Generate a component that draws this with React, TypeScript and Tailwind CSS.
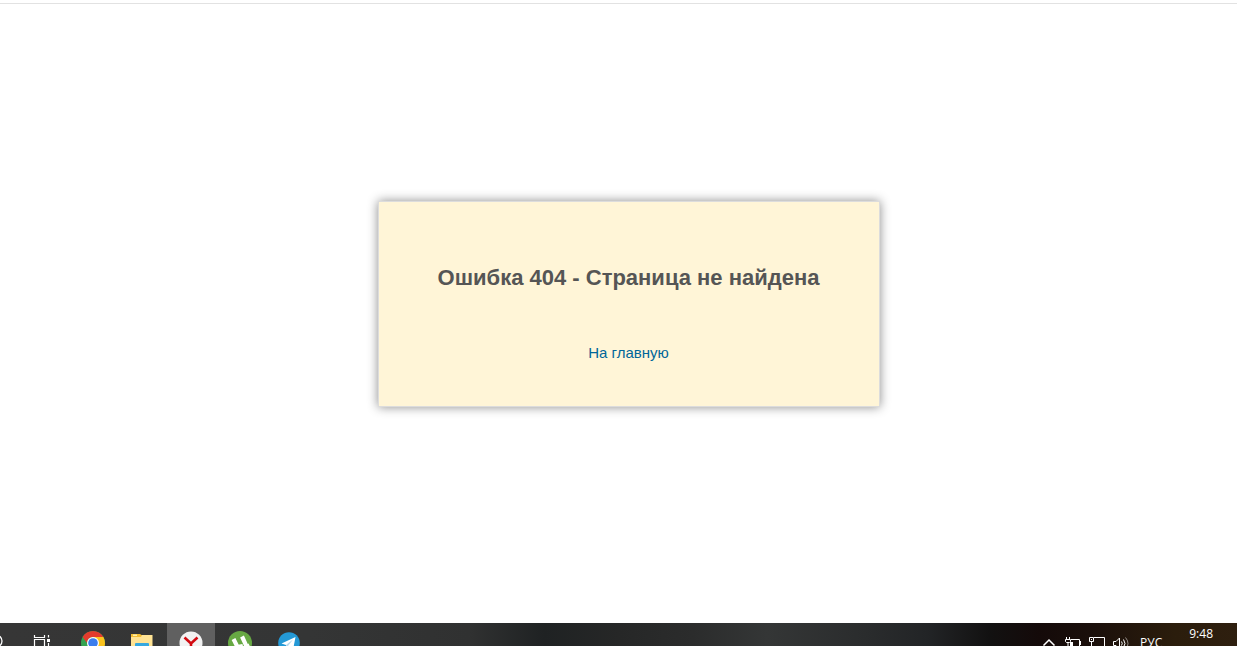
import type { ReactNode } from 'react'

export default function App() {
  return (
    <div className="flex flex-col h-screen overflow-hidden bg-white font-['Liberation_Sans',Arial,sans-serif]">
      <header className="mt-[3px] border-t border-[#e2e2e2]" />
      <main className="flex flex-1 items-center justify-center pl-5 pb-5">
        <section className="w-full max-w-[502px] border border-[#dcdcdc] bg-[#fff5d7] px-6 pt-[61px] pb-[41px] text-center shadow-[0_0_10px_rgba(0,0,0,0.45)]">
          <h1 className="text-[22px] leading-[30px] font-bold text-[#555555]">
            Ошибка 404 - Страница не найдена
          </h1>
          <p className="mt-12 text-[15px] leading-6">
            <a href="/" className="text-[#006699] hover:underline">
              На главную
            </a>
          </p>
        </section>
      </main>
      <Taskbar />
    </div>
  )
}

function Taskbar() {
  return (
    <footer className="h-[23px] shrink-0 overflow-hidden bg-[linear-gradient(to_right,#363636_0%,#343535_25%,#303131_38%,#1f2223_44%,#262727_50%,#2b2c2c_56%,#343636_62%,#2a2c2d_70%,#222426_75%,#121111_80%,#140a09_84%,#1a0f0b_88%,#2b1d0c_95%,#2e1f0f_100%)]">
      <div className="flex h-10 justify-between text-white">
        <nav className="flex gap-px">
          <button aria-label="Поиск" className="flex w-[19px] items-center">
            <svg className="-ml-3 size-4" viewBox="0 0 16 16" fill="none" stroke="currentColor" strokeWidth="1.3">
              <circle cx="8" cy="6" r="6" />
            </svg>
          </button>
          <TaskButton label="Представление задач">
            <TaskViewIcon />
          </TaskButton>
          <TaskButton label="Google Chrome">
            <ChromeIcon />
          </TaskButton>
          <TaskButton label="Проводник">
            <FolderIcon />
          </TaskButton>
          <TaskButton label="Яндекс Браузер" active>
            <YandexIcon />
          </TaskButton>
          <TaskButton label="uTorrent">
            <TorrentIcon />
          </TaskButton>
          <TaskButton label="Telegram">
            <TelegramIcon />
          </TaskButton>
        </nav>
        <div className="flex items-center pr-6 font-['Open_Sans','Noto_Sans',sans-serif] text-xs">
          <div className="flex items-center gap-2">
            <TrayButton label="Скрытые значки">
              <path d="M2.5 8.5 8 3l5.5 5.5" strokeWidth="1.5" />
            </TrayButton>
            <TrayButton label="Батарея">
              <path d="M1.5 0v2M4.5 0v2M.5 2.5h5v2l-1 1h-3l-1-1zM3 5.5V10M6 2.5h8.5v8H5M15.5 4v4" />
              <path d="M5 5h3v5H5z" fill="currentColor" stroke="none" />
            </TrayButton>
            <TrayButton label="Сеть">
              <path d="M.5.5h4v4h-4zM2.5 4.5v7M5 .5h10.5v10H5M6 13.5h8" />
              <path d="M2 2h1v1H2z" fill="currentColor" stroke="none" />
            </TrayButton>
            <TrayButton label="Громкость">
              <path d="M.5 4.5H3L6.5 1v11L3 8.5H.5zM8.5 4.5q1.500 2 0 4M10.5 2.5q3 4 0 8" />
              <path d="M12.500.5q5 6 0 12" opacity=".5" />
            </TrayButton>
          </div>
          <button className="ml-[11px] w-6 text-left" aria-label="Язык ввода: русский">
            РУС
          </button>
          <time className="ml-[25px] w-6 self-start pt-[3px] text-right leading-4">9:48</time>
        </div>
      </div>
    </footer>
  )
}

function TaskButton({ label, active, children }: { label: string; active?: boolean; children: ReactNode }) {
  return (
    <button
      aria-label={label}
      className={`flex w-12 items-center justify-center ${active ? 'bg-[#606060]' : 'hover:bg-white/10'}`}
    >
      {children}
    </button>
  )
}

function TrayButton({ label, children }: { label: string; children: ReactNode }) {
  return (
    <button aria-label={label}>
      <svg className="block h-3 w-4 overflow-visible" viewBox="0 0 16 12" fill="none" stroke="currentColor">
        {children}
      </svg>
    </button>
  )
}

// bottom part of each icon hangs below the window edge
function TaskViewIcon() {
  return (
    <svg className="size-6" viewBox="0 0 24 24" fill="none" stroke="currentColor">
      <path d="M2.5 4v2.5h10V4M2.5 8.5h10v8h-10zM2.5 22v-2.5h10V22M16.5 4v2.5M16.5 12v9" strokeWidth="1.2" />
      <path d="M15 8h3v3h-3z" fill="currentColor" stroke="none" />
    </svg>
  )
}

function ChromeIcon() {
  return (
    <svg className="size-6" viewBox="0 0 24 24">
      <circle cx="12" cy="12" r="12" fill="#34a350" />
      <path d="M12 6h10.390A12 12 0 0 1 12 24l5.200-9z" fill="#fcc31e" />
      <path d="M1.610 6A12 12 0 0 1 22.390 6H12a6 6 0 0 0-6 6z" fill="#e33b2e" />
      <circle cx="12" cy="12" r="6" fill="#fff" />
      <circle cx="12" cy="12" r="4.800" fill="#3b7ded" />
    </svg>
  )
}

function FolderIcon() {
  return (
    <svg className="size-6" viewBox="0 0 24 24">
      <path d="M1 3h9l1.500 1H22v17H1z" fill="#f3bd34" />
      <path d="M3 3.500h4V5H3z" fill="#fff0a8" />
      <path d="M1 6h10l1-2h10.500v17H1z" fill="#ffe394" />
      <path d="M5 13q0-1 1-1h12q1 0 1 1v8h-4v-4H9v4H5z" fill="#35a8e0" />
    </svg>
  )
}

function YandexIcon() {
  return (
    <svg className="size-6" viewBox="0 0 24 24">
      <circle cx="12" cy="12" r="11.5" fill="#f2f2f2" />
      <path d="m5.5 6.5 6.5 6 6.5-6M12 12v9" fill="none" stroke="#d20a11" strokeWidth="2.6" />
    </svg>
  )
}

function TorrentIcon() {
  return (
    <svg className="size-6" viewBox="0 0 24 24">
      <circle cx="12" cy="12" r="12" fill="#67a843" />
      <path d="m5.5 8 3 6q1.500 2.500 6.500 1M14 5.500l3.500 7.500q1 3 4 1.500" fill="none" stroke="#fff" strokeWidth="4.2" />
    </svg>
  )
}

function TelegramIcon() {
  return (
    <svg className="size-6" viewBox="0 0 24 24">
      <circle cx="12" cy="12" r="10.8" fill="#2499d6" />
      <path d="M4.5 12.5 18.5 6 16 19l-4-3-2 2-1-4z" fill="#fff" />
      <path d="m9 14 7-5.5-5 6.5-1.5 3z" fill="#b5d8ec" />
    </svg>
  )
}
